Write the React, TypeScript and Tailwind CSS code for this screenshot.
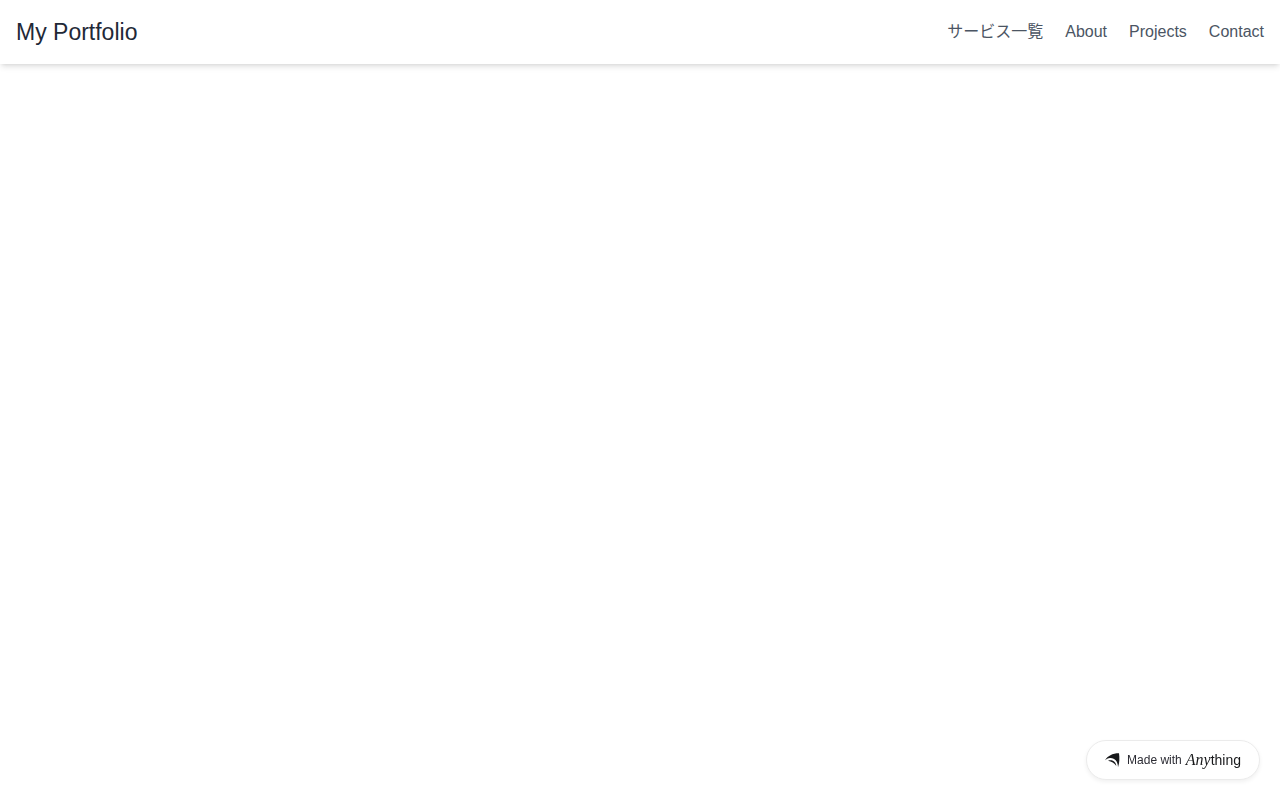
import React from "react";

// ================================
// TYPES
// ================================

interface NavItem {
  label: string;
  href: string;
}

const navItems: NavItem[] = [
  { label: "サービス一覧", href: "#services" },
  { label: "About", href: "#about" },
  { label: "Projects", href: "#projects" },
  { label: "Contact", href: "#contact" },
];

// ================================
// HEADER
// ================================

const Header: React.FC = () => (
  <header className="bg-white shadow-md">
    <div className="flex h-16 items-center justify-between px-4">
      <h1 className="text-[23px] leading-8 text-[#1f2937]">My Portfolio</h1>
      <nav>
        <ul className="flex items-center gap-[22px]">
          {navItems.map((item) => (
            <li key={item.href}>
              <a href={item.href} className="text-base text-[#4b5563] hover:text-[#1f2937]">
                {item.label}
              </a>
            </li>
          ))}
        </ul>
      </nav>
    </div>
  </header>
);

// ================================
// BADGE
// ================================

const AnythingMark: React.FC = () => (
  <svg className="h-4 w-4 shrink-0" viewBox="0 0 48 48" fill="#18191b" aria-hidden="true">
    <path d="M0 25C8 12 22 4 42 4C44 18 44 32 39 46C39 28 29 17 15 18C9 18 4 21 0 25Z" />
    <path d="M9 26C23 21 33 29 34 42C28 33 20 28 9 26Z" />
  </svg>
);

const MadeWithBadge: React.FC = () => (
  <a
    href="#anything"
    className="fixed right-5 bottom-5 flex h-10 items-center rounded-full border border-[#ebebeb] bg-white px-[18px] text-[#18191b] shadow-[0_2px_4px_rgba(0,0,0,0.06)]"
  >
    <AnythingMark />
    <span className="ml-1.5 text-xs text-[#2b2b33]">Made with</span>
    <span className="ml-1 flex items-baseline leading-5">
      <span className="font-['Liberation_Serif',serif] text-base leading-5 italic">Any</span>
      <span className="text-sm leading-5">thing</span>
    </span>
  </a>
);

export default function App() {
  return (
    <div className="min-h-screen bg-white font-['Liberation_Sans','Noto_Sans_CJK_JP',sans-serif]">
      <Header />
      <MadeWithBadge />
    </div>
  );
}
